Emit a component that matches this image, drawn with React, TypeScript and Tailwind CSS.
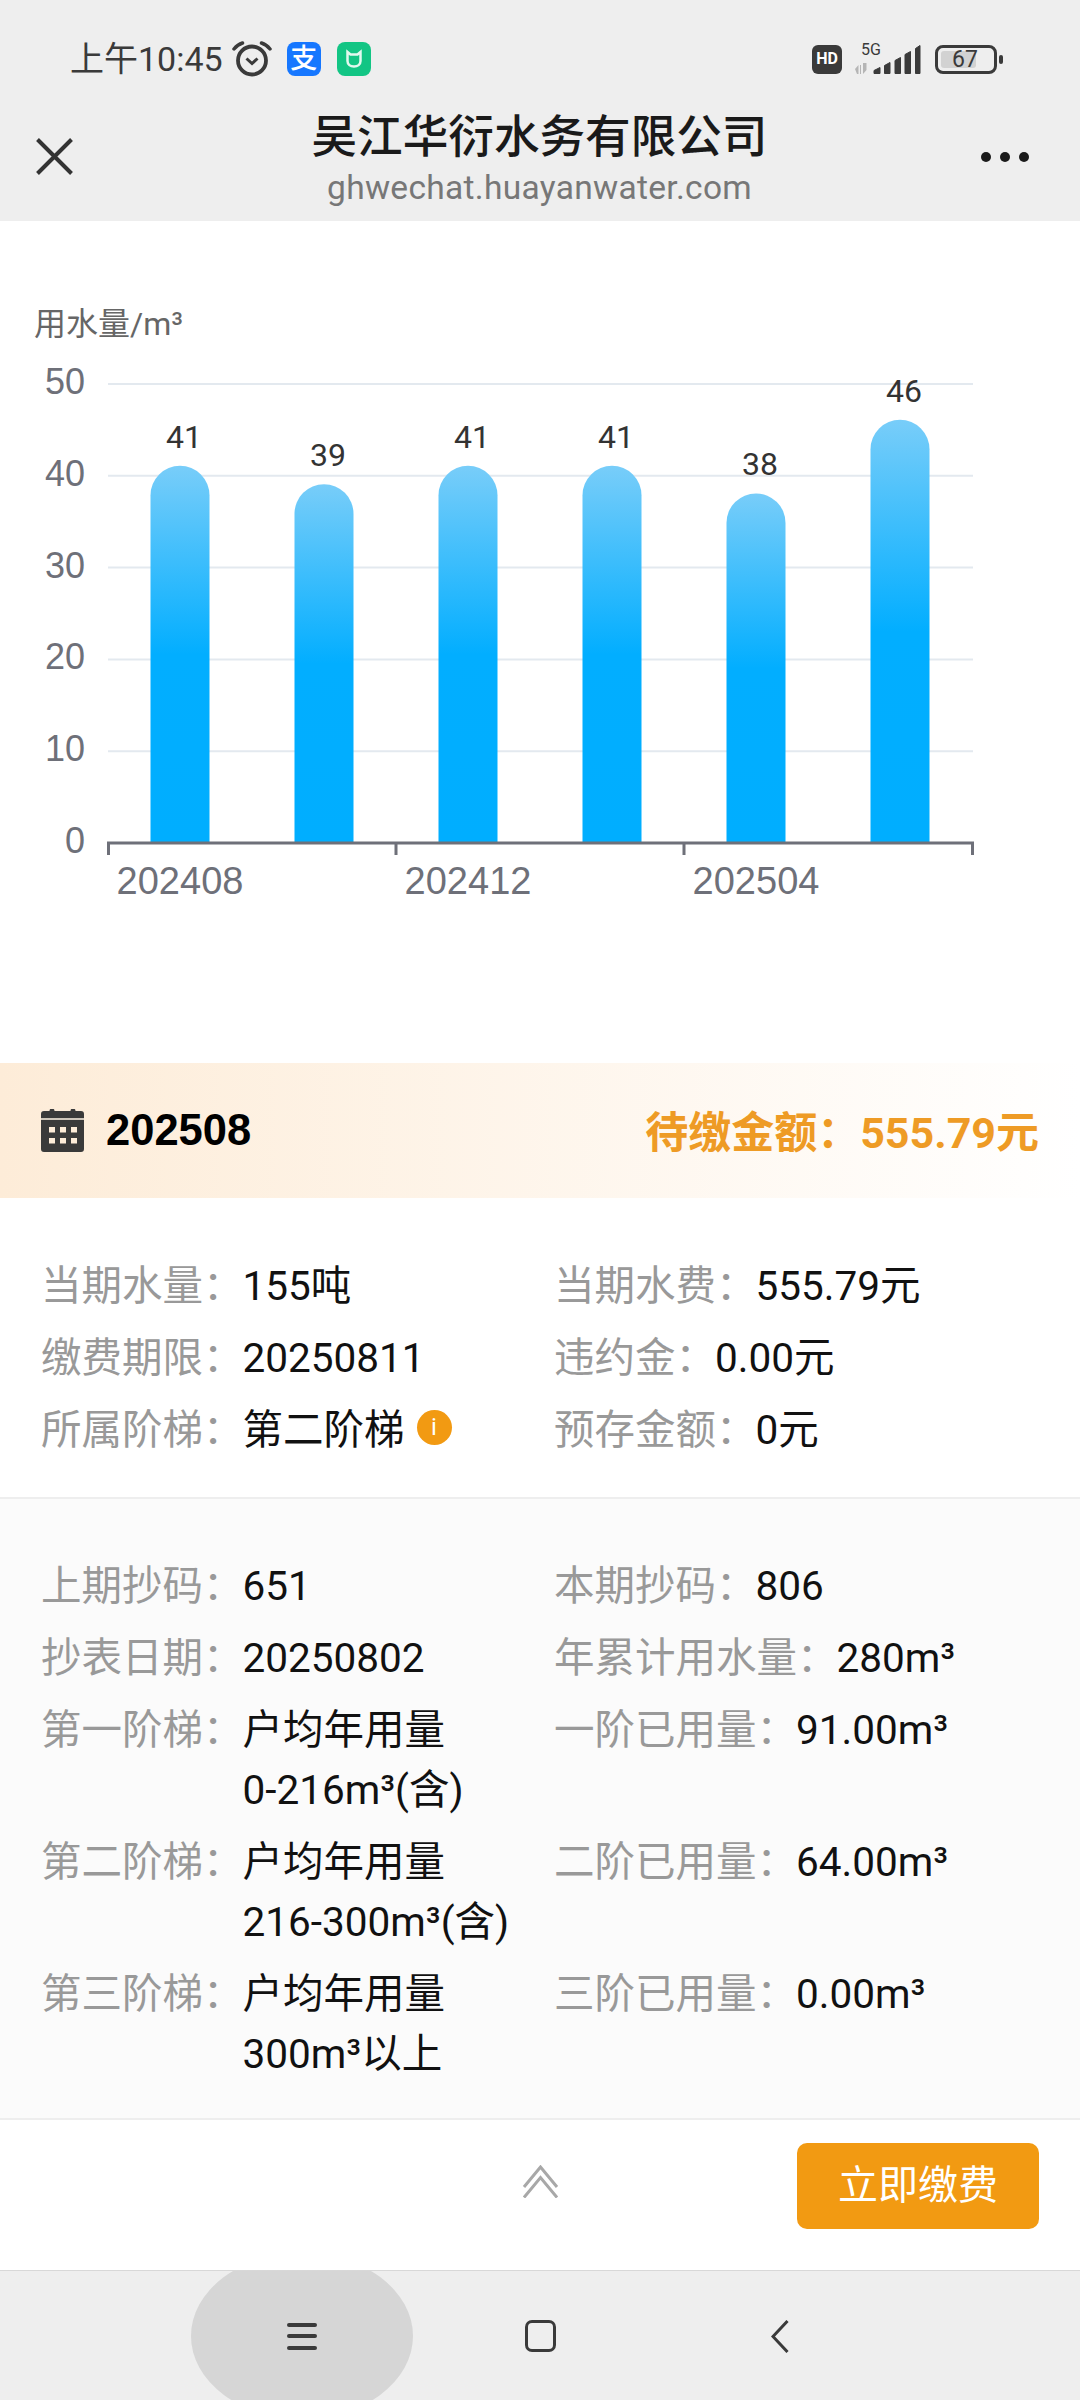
import React from 'react';

const FONT = 'font-[Roboto,"Noto_Sans_CJK_SC",sans-serif]';

const usage = [
  { value: 41, label: '202408' },
  { value: 39 },
  { value: 41, label: '202412' },
  { value: 41 },
  { value: 38, label: '202504' },
  { value: 46 },
];

function StatusBar() {
  return (
    <div className="flex h-[36px] items-center justify-between pl-[70px] pr-[77px] text-[#3a3a3a]">
      <div className="flex items-center">
        <span className="text-[34px] leading-none">上午10:45</span>
        <svg className="ml-[9px]" width="40" height="36" viewBox="0 0 40 36" fill="none" stroke="#3a3a3a">
          <circle cx="20" cy="19.500" r="14" strokeWidth="3.800" />
          <path d="M14.500 17.500l5.500 5 5.500-5" strokeWidth="3" />
          <path d="M2 8C4 5.500 7 3 10.500 2M38 8C36 5.500 33 3 29.500 2" strokeWidth="3.500" strokeLinecap="round" />
        </svg>
        <div className="ml-[15px] flex h-[34px] w-[34px] items-center justify-center rounded-[8px] bg-[#1677ff] text-[27px] font-medium leading-none text-white">
          支
        </div>
        <div className="ml-[16px] flex h-[34px] w-[34px] items-center justify-center rounded-[8px] bg-[#12c584]">
          <svg width="20" height="20" viewBox="0 0 20 20" fill="none" stroke="#e2f9ef" strokeWidth="2.500">
            <path d="M3.500 3l3 2.500h7l3-2.500v9c0 3.500-2.800 5.500-6.500 5.500S3.500 15.500 3.500 12z" />
          </svg>
        </div>
      </div>
      <div className="flex items-center">
        <div className="flex h-[29px] w-[30px] items-center justify-center rounded-[6px] bg-[#3a3a3a] text-[16px] font-bold leading-none text-white">
          HD
        </div>
        <svg className="ml-[13px]" width="66" height="36" viewBox="0 0 66 36">
          <text x="6" y="14" fontSize="16" fill="#3a3a3a" fontFamily="Roboto, sans-serif">5G</text>
          <path d="M0 28l3.500-4v9H2zM8 33l3.500-4v-7H8zM5 24h1v9H5z" fill="#b5b5b5" />
          <g fill="#3a3a3a" stroke="#3a3a3a" strokeWidth="1" strokeLinejoin="round">
            <path d="M19 32.500v-3l6-3v6z" />
            <path d="M29.500 32.500v-8l5.500-3v11z" />
            <path d="M40 32.500v-13l5.500-3v16z" />
            <path d="M50 32.500v-19l5.500-3v22z" />
            <path d="M60.500 32.500v-25l4.500-3v28z" />
          </g>
        </svg>
        <div className="relative ml-[14px] flex h-[29px] w-[62px] items-center rounded-[8px] border-[3.5px] border-[#3a3a3a] pl-[3px]">
          <div className="h-[17px] w-[35px] rounded-[3px] bg-[#d2d2d2]" />
          <span className="absolute left-[14px] top-[1px] text-[23px] leading-[22px]">67</span>
        </div>
        <div className="ml-[2px] h-[9px] w-[4px] rounded-[2px] bg-[#3a3a3a]" />
      </div>
    </div>
  );
}

function TitleBar() {
  return (
    <div className="grid grid-cols-[1fr_auto_1fr] items-start pl-[36px] pr-[37px] pt-[36px]">
      <svg className="mt-[25px]" width="37" height="37" viewBox="0 0 37 37" stroke="#333333" strokeWidth="4">
        <path d="M1.500 1.500l34 34M35.500 1.500l-34 34" />
      </svg>
      <div className="flex flex-col items-center">
        <div className="text-[45.6px] font-medium leading-[50px] text-[#1a1a1a]">吴江华衍水务有限公司</div>
        <div className="mt-[3px] text-[33.5px] leading-[44px] tracking-[0.3px] text-[#777777]">ghwechat.huayanwater.com</div>
      </div>
      <div className="mr-[14px] mt-[39px] flex w-[48px] justify-between justify-self-end">
        <div className="h-[10px] w-[10px] rounded-full bg-[#1a1a1a]" />
        <div className="h-[10px] w-[10px] rounded-full bg-[#1a1a1a]" />
        <div className="h-[10px] w-[10px] rounded-full bg-[#1a1a1a]" />
      </div>
    </div>
  );
}

function UsageChart() {
  const baseY = 843;
  const unit = 9.2;
  const barWidth = 59;
  const r = barWidth / 2;

  return (
    <svg className="block" width="1080" height="842" viewBox="0 221 1080 842">
      <defs>
        <linearGradient id="barFill" x1="0" y1="0" x2="0" y2="1">
          <stop offset="0" stopColor="#78cdf9" />
          <stop offset="0.5" stopColor="#02aeff" />
          <stop offset="1" stopColor="#00aeff" />
        </linearGradient>
      </defs>
      <text x="34" y="335" fontSize="32" fill="#666666" fontFamily='Roboto, "Noto Sans CJK SC", sans-serif'>用水量/m³</text>
      {[50, 40, 30, 20, 10, 0].map((tick) => {
        const y = baseY - tick * 9.18;
        return (
          <g key={tick}>
            {tick > 0 && <line x1="108" x2="973" y1={y} y2={y} stroke="#e3e9ef" strokeWidth="2" />}
            <text x="85" y={y + 10} textAnchor="end" fontSize="36" fill="#6e7079" fontFamily='"Liberation Sans", sans-serif'>{tick}</text>
          </g>
        );
      })}
      {usage.map((item, i) => {
        const x = 150.5 + i * 144;
        const top = baseY - item.value * unit;
        return (
          <g key={i}>
            <path
              d={`M${x} ${baseY}V${top + r}A${r} ${r} 0 0 1 ${x + barWidth} ${top + r}V${baseY}Z`}
              fill="url(#barFill)"
            />
            <text x={x + r + 4} y={top - 18} textAnchor="middle" fontSize="32" fill="#333333" fontFamily="Roboto, sans-serif">{item.value}</text>
            {item.label && (
              <text x={x + r} y="894" textAnchor="middle" fontSize="38" fill="#6e7079" fontFamily='"Liberation Sans", sans-serif'>{item.label}</text>
            )}
          </g>
        );
      })}
      <path d="M108.500 855V843H972.500V855M396 843V855M684 843V855" fill="none" stroke="#6e7079" strokeWidth="3" />
    </svg>
  );
}

function Field({ label, children }: { label: string; children: React.ReactNode }) {
  return (
    <div className="flex">
      <span className="mr-[-1px] shrink-0 text-[#999999]">{label}</span>
      <div className="text-[#111111]">{children}</div>
    </div>
  );
}

function InfoIcon() {
  return (
    <span className="relative top-[-6px] ml-[12px] inline-flex h-[35px] w-[35px] items-center justify-center rounded-full bg-[#f29a12] align-middle text-[24px] leading-none text-white">
      i
    </span>
  );
}

function PeriodBand() {
  return (
    <div className="flex h-[135px] items-center justify-between bg-gradient-to-r from-[#fdecd8] to-[#ffffff] pl-[41px] pr-[41px]">
      <div className="flex items-center">
        <svg width="43" height="43" viewBox="0 0 43 43">
          <path d="M3 2h5.500a2.500 2.500 0 0 1 5 0h16a2.500 2.500 0 0 1 5 0H40a3 3 0 0 1 3 3v35a3 3 0 0 1-3 3H3a3 3 0 0 1-3-3V5a3 3 0 0 1 3-3z" fill="#3a3a3a" />
          <rect x="0" y="9" width="43" height="2" fill="#cfc7bb" />
          <g fill="#fdecd8">
            <rect x="8" y="18" width="6" height="5.500" />
            <rect x="19" y="18" width="6" height="5.500" />
            <rect x="30" y="18" width="6" height="5.500" />
            <rect x="8" y="29" width="6" height="5.500" />
            <rect x="19" y="29" width="6" height="5.500" />
            <rect x="30" y="29" width="6" height="5.500" />
          </g>
        </svg>
        <span className="ml-[22px] font-['Liberation_Sans'] text-[43.5px] font-bold text-black">202508</span>
      </div>
      <span className="mt-[6px] text-[43px] font-bold text-[#ee9b25]">待缴金额：555.79元</span>
    </div>
  );
}

function BottomBar() {
  return (
    <div className="grid h-[152px] grid-cols-3 border-t-2 border-[#eeeeee] bg-white pt-[23px]">
      <div />
      <div className="flex justify-center pt-[22px]">
        <svg width="37" height="33" viewBox="0 0 37 33" fill="none" stroke="#a8a8a8" strokeWidth="3">
          <path d="M2 22L18.500 2 35 22M2 32.500L18.500 12.500 35 32.500" />
        </svg>
      </div>
      <div className="flex items-start justify-end pr-[41px]">
        <div className="flex h-[86px] w-[242px] items-center justify-center rounded-[10px] bg-[#f29a12] text-[40px] text-white">
          立即缴费
        </div>
      </div>
    </div>
  );
}

function NavBar() {
  return (
    <div className="flex h-[131px] items-center overflow-hidden border-t border-[#d8d8d8] bg-[#eeeeee]">
      <div className="ml-[191px] flex h-[166px] w-[222px] shrink-0 items-center justify-center rounded-[50%] bg-[#d6d6d6]">
        <div className="flex h-[27px] w-[30px] flex-col justify-between">
          <div className="h-[4px] rounded-full bg-[#3a3a3a]" />
          <div className="h-[4px] rounded-full bg-[#3a3a3a]" />
          <div className="h-[4px] rounded-full bg-[#3a3a3a]" />
        </div>
      </div>
      <div className="ml-[112px] h-[32px] w-[31px] rounded-[7px] border-[3.5px] border-[#3a3a3a]" />
      <svg className="ml-[215px]" width="18" height="33" viewBox="0 0 18 33" fill="none" stroke="#3a3a3a" strokeWidth="3">
        <path d="M16.500 1L2 16.500 16.500 32" />
      </svg>
    </div>
  );
}

export default function App() {
  return (
    <div className={`${FONT} h-[2400px] w-[1080px] overflow-hidden bg-white`}>
      <header className="h-[221px] bg-[#eeeeee] pt-[41px]">
        <StatusBar />
        <TitleBar />
      </header>
      <UsageChart />
      <PeriodBand />
      <section className="grid grid-cols-[513px_1fr] gap-y-3 border-b-2 border-[#eeeeee] pb-[37px] pl-[41px] pt-[58px] text-[40.5px] leading-[60px]">
        <Field label="当期水量：">155吨</Field>
        <Field label="当期水费：">555.79元</Field>
        <Field label="缴费期限：">20250811</Field>
        <Field label="违约金：">0.00元</Field>
        <Field label="所属阶梯：">第二阶梯<InfoIcon /></Field>
        <Field label="预存金额：">0元</Field>
      </section>
      <section className="grid grid-cols-[513px_1fr] gap-y-3 bg-[#fbfbfb] pb-[34px] pl-[41px] pt-[57px] text-[40.5px] leading-[60px]">
        <Field label="上期抄码：">651</Field>
        <Field label="本期抄码：">806</Field>
        <Field label="抄表日期：">20250802</Field>
        <Field label="年累计用水量：">280m³</Field>
        <Field label="第一阶梯：">户均年用量<br />0-216m³(含)</Field>
        <Field label="一阶已用量：">91.00m³</Field>
        <Field label="第二阶梯：">户均年用量<br />216-300m³(含)</Field>
        <Field label="二阶已用量：">64.00m³</Field>
        <Field label="第三阶梯：">户均年用量<br />300m³以上</Field>
        <Field label="三阶已用量：">0.00m³</Field>
      </section>
      <BottomBar />
      <NavBar />
    </div>
  );
}
